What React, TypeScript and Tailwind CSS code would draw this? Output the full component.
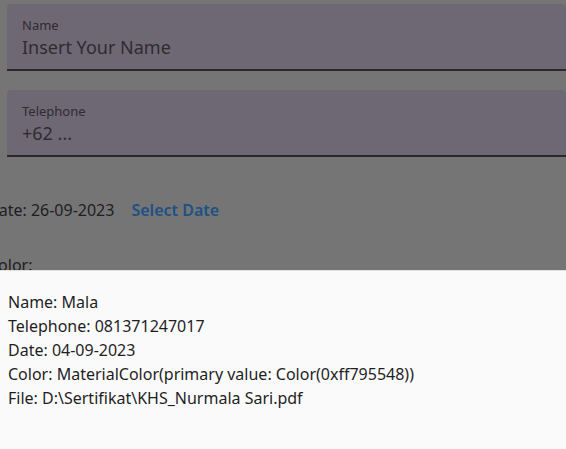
export default function App() {
  const font = { fontFamily: '"Noto Sans", "Open Sans", sans-serif' }
  return (
    <div className="relative h-[449px] w-[566px] overflow-hidden bg-[#757575]" style={font}>
      {/* form behind the dimmed barrier */}
      <div className="flex flex-col pt-[4px]">
        <div className="ml-[7px] flex h-[67px] flex-col rounded-t-[4px] border-b-2 border-[#2a282c] bg-[#6e6875] pl-[15px] pt-[13px]">
          <span className="text-[13px] leading-[16px] text-[#2e2b31]">Name</span>
          <span className="mt-[2px] text-[18px] leading-[24px] text-[#2e2b31]">Insert Your Name</span>
        </div>
        <div className="ml-[7px] mt-[19px] flex h-[67px] flex-col rounded-t-[4px] border-b-2 border-[#2a282c] bg-[#6e6875] pl-[15px] pt-[13px]">
          <span className="text-[13px] leading-[16px] text-[#2e2b31]">Telephone</span>
          <span className="mt-[2px] text-[18px] leading-[24px] text-[#2e2b31]">+62 ...</span>
        </div>
        <div className="ml-[-13px] mt-[41px] flex items-center gap-[17px] text-[16px] leading-[24px]">
          <span className="text-[#1f1d22]">Date: 26-09-2023</span>
          <span className="font-semibold text-[#1d5184]">Select Date</span>
        </div>
        <div className="ml-[-12px] mt-[31px] text-[16px] leading-[24px] text-[#1f1d22]">Color:</div>
      </div>

      {/* bottom sheet */}
      <div className="absolute bottom-0 left-0 right-0 h-[179px] border-t border-[#e0e0e0] bg-[#fafafa] pl-[8px] pt-[19px] text-[16px] leading-[24px] text-[#1f1f1f]">
        <div>Name: Mala</div>
        <div>Telephone: 081371247017</div>
        <div>Date: 04-09-2023</div>
        <div>Color: MaterialColor(primary value: Color(0xff795548))</div>
        <div>File: D:\Sertifikat\KHS_Nurmala Sari.pdf</div>
      </div>
    </div>
  )
}
